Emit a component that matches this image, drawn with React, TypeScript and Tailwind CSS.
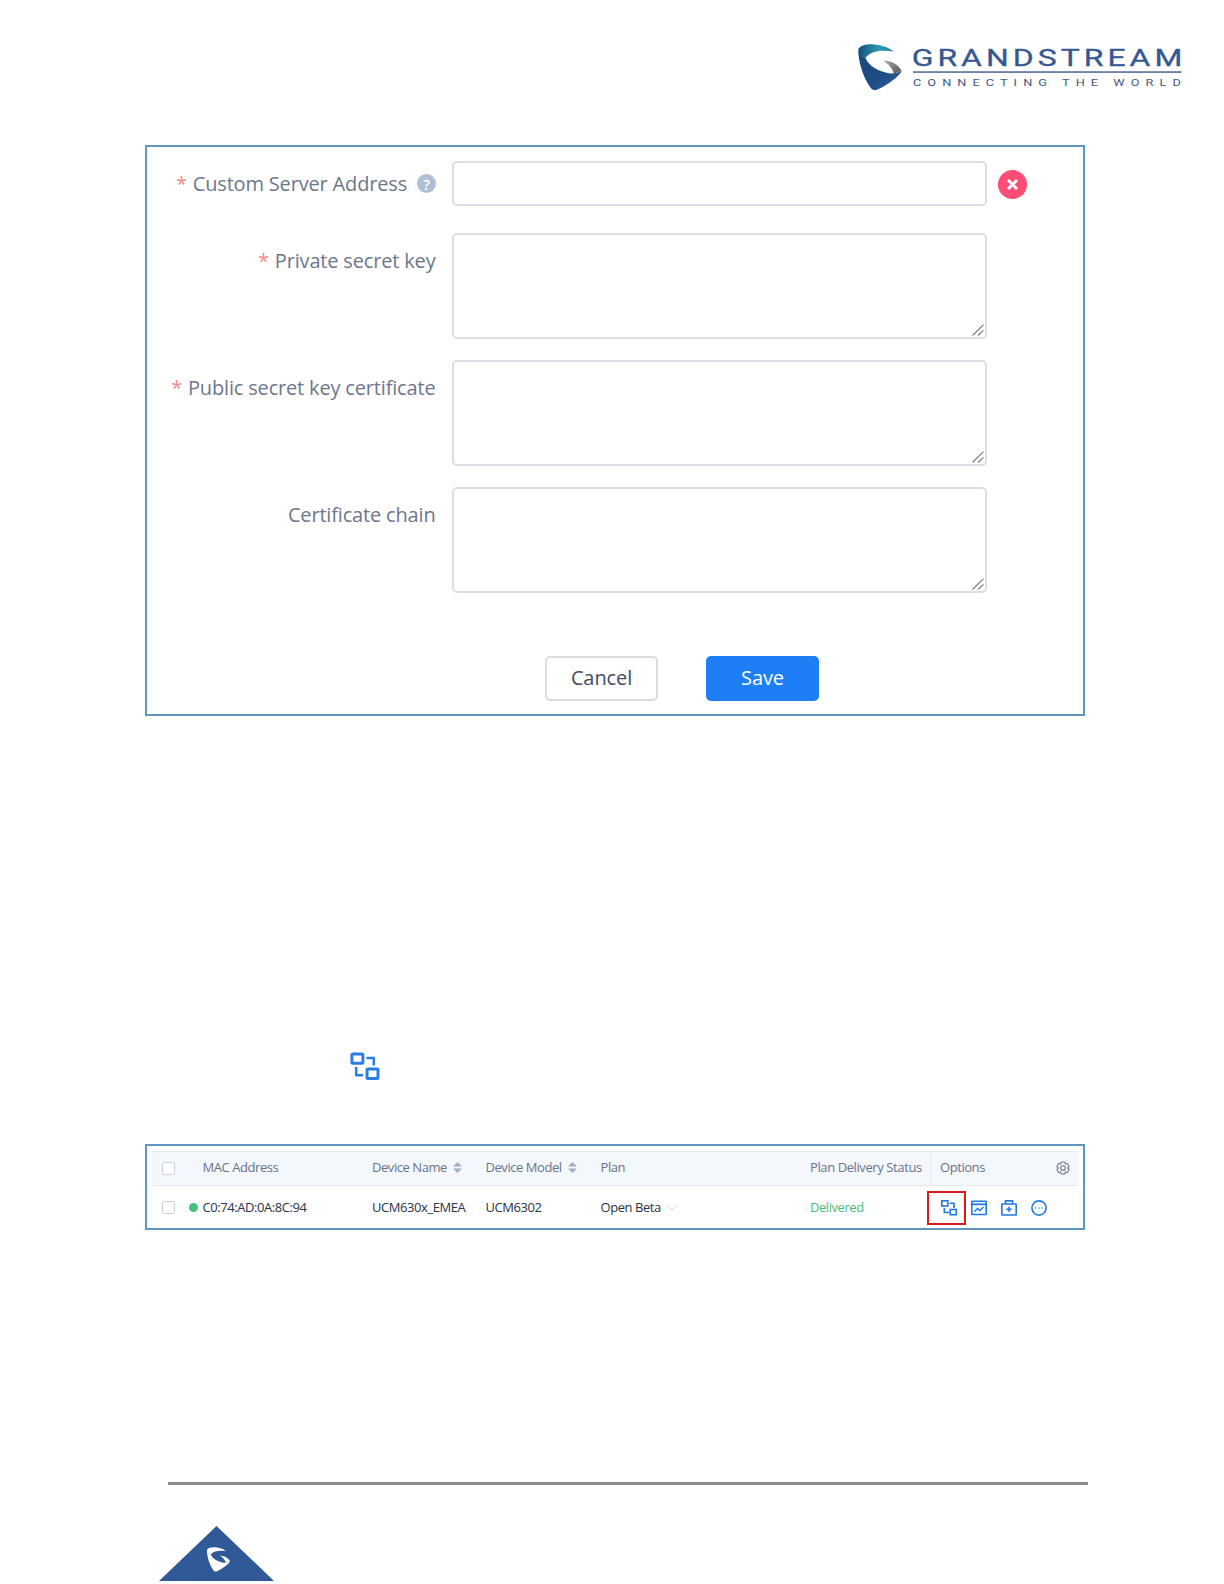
import React from "react";

const labelFont = "font-['Open_Sans','Noto_Sans',sans-serif]";

function BrandMark({ className, light = false }: { className: string; light?: boolean }) {
  return (
    <svg className={className} viewBox="0 0 44 47" aria-hidden="true">
      <defs>
        <linearGradient id="swoosh" x1="0" y1="0" x2="1" y2="0">
          <stop offset="0" stopColor="#17517f" />
          <stop offset="0.6" stopColor="#2d9ab5" />
          <stop offset="1" stopColor="#2a7fa5" />
        </linearGradient>
        <linearGradient id="shield" x1="0" y1="0" x2="1" y2="1">
          <stop offset="0" stopColor="#174a7c" />
          <stop offset="0.6" stopColor="#1f4c86" />
          <stop offset="1" stopColor="#34679c" />
        </linearGradient>
        <linearGradient id="wing" x1="0" y1="0" x2="1" y2="1">
          <stop offset="0" stopColor="#aaa" />
          <stop offset="1" stopColor="#555" />
        </linearGradient>
      </defs>
      <path d="M0.3 5C3 1 9 0 16 0.4C24 1 31 3.5 36 7.6C25 6 13 6.5 7.5 14L1.2 10Z" fill={light ? "#fff" : "url(#swoosh)"} />
      <path d="M0.3 5C1 9 3.5 12 7.5 14C11 22 20 27.5 32 29.5C36 30 40 28.5 43.7 27C42 32 28 42 19.5 45.6C16.5 46.7 14.5 46.3 12.5 43.5C5 33.5 0 17 0.3 5Z" fill={light ? "#fff" : "url(#shield)"} />
      <path d="M25 16.5C33 16.5 40.5 20.5 43.7 27L36 29.5C34 24.5 31 20 25 16.5Z" fill={light ? "#fff" : "url(#wing)"} />
    </svg>
  );
}

function LinkIcon({ className }: { className: string }) {
  return (
    <svg className={className} viewBox="0 0 30 29" fill="none" stroke="#2a7de8" strokeWidth="3" strokeLinejoin="round" aria-hidden="true">
      <rect x="1.9" y="2" width="11" height="9.2" rx="1" />
      <rect x="17" y="17" width="11" height="9.4" rx="1" />
      <path d="M16.5 6H23.8V13.4M6.2 15V23.2H13" strokeWidth="2.5" />
    </svg>
  );
}

function Grip() {
  return (
    <svg className="h-3 w-3" viewBox="0 0 12 12" stroke="#777" strokeWidth="1.1" aria-hidden="true">
      <path d="M0.5 11.5L11.5 0.7M6 11.5L11.5 6.3" />
    </svg>
  );
}

function Sort() {
  return (
    <svg className="ml-[6px] h-[11px] w-[9px]" viewBox="0 0 9 11" fill="#a3adc0" aria-hidden="true">
      <path d="M4.5 0L9 4.6H0ZM4.5 11L9 6.4H0Z" />
    </svg>
  );
}

function Field({ label, required }: { label: string; required?: boolean }) {
  return (
    <div className="flex h-[127px] items-start">
      <div className="flex w-[288.5px] justify-end pt-[14px] text-[20px] leading-7 tracking-[-0.17px] text-[#6d778c]">
        {required && <span className="mr-[6px] text-[#f58a88]">*</span>}
        <span>{label}</span>
      </div>
      <div className="ml-[16.5px] flex h-[106px] w-[535px] items-end justify-end rounded-[5px] border-2 border-[#dcdee6] p-px">
        <Grip />
      </div>
    </div>
  );
}

const cols = "grid grid-cols-[50.5px_169.5px_113.5px_115px_209.5px_119px_1fr] items-center";

export default function App() {
  return (
    <main className={`${labelFont} flex h-[1584px] w-[1224px] flex-col bg-white`}>
      <header className="flex h-[145px] items-start justify-end pr-[32px] pt-[44px]">
        <BrandMark className="mr-[11px] h-[47px] w-[44px]" />
        <svg className="h-[47px] w-[279px]" viewBox="0 0 279 47">
          <text x="-1" y="21.5" transform="scale(1.33 1)" fontFamily="Roboto" fontSize="24" fill="#345891" stroke="#345891" strokeWidth="0.3" textLength="205.5" letterSpacing="2">GRANDSTREAM</text>
          <rect y="27.3" width="268.5" height="1.5" fill="#4a6496" />
          <text x="0" y="42" transform="scale(1.3 1)" fontFamily="Roboto" fontSize="9.8" fill="#42577f" textLength="211" letterSpacing="5">CONNECTING THE WORLD</text>
        </svg>
      </header>

      <section className="ml-[145px] flex h-[571px] w-[940px] flex-col border-2 border-[#6196c0] pt-[14px]">
        <div className="flex h-[72px] items-start">
          <div className="flex w-[289px] items-center justify-end pt-[8.5px] text-[20px] leading-7 tracking-[-0.17px] text-[#6d778c]">
            <span className="mr-[6px] text-[#f58a88]">*</span>
            <span>Custom Server Address</span>
            <span className="ml-[10px] flex h-[19px] w-[19px] items-center justify-center rounded-full bg-[#afbfd5] text-[15px] font-semibold text-white">?</span>
          </div>
          <div className="ml-[16px] h-[45px] w-[535px] rounded-[5px] border-2 border-[#dadce8]" />
          <div className="ml-[10.5px] mt-[9px] flex h-[29px] w-[29px] items-center justify-center rounded-full bg-[#fb4d75]">
            <svg className="h-[11px] w-[11px]" viewBox="0 0 11 11" stroke="white" strokeWidth="3">
              <path d="M1 1L10 10M10 1L1 10" />
            </svg>
          </div>
        </div>
        <Field label="Private secret key" required />
        <Field label="Public secret key certificate" required />
        <Field label="Certificate chain" />
        <div className="ml-[398px] mt-[41.5px] flex gap-[48px] text-[20px]">
          <button className="h-[45px] w-[113px] rounded-[5px] border-2 border-[#dadce0] tracking-[-0.1px] text-[#414c62]">Cancel</button>
          <button className="h-[45px] w-[113px] rounded-[5px] bg-[#1e7ef5] tracking-[-0.1px] text-white">Save</button>
        </div>
      </section>

      <LinkIcon className="ml-[350px] mt-[336px] h-[29px] w-[30px]" />

      <section className="ml-[145px] mt-[63px] h-[86px] w-[940px] border-2 border-[#6196c0] px-[5px] pt-[5px] text-[13px] tracking-[-0.44px]">
        <div className={`${cols} h-[35px] border-y border-[#e4eaf0] bg-[#f4f8fc] text-[#68738a]`}>
          <span className="-mt-px ml-[10px] h-[13px] w-[13px] rounded-[2px] border border-[#cdd3dc] bg-white" />
          <span className="pb-px">MAC Address</span>
          <span className="flex items-center pb-[2px]">Device Name<Sort /></span>
          <span className="flex items-center pb-[2px]">Device Model<Sort /></span>
          <span className="pb-px">Plan</span>
          <span className="whitespace-nowrap pb-px tracking-[-0.4px]">Plan Delivery Status</span>
          <span className="ml-px flex h-full items-center justify-between border-l border-[#e4eaf0] pb-px pl-[9px] pr-[8px]">
            Options
            <svg className="h-[14px] w-[14px]" viewBox="0 0 24 24" fill="none" stroke="#6b7588" strokeWidth="1.8" strokeLinejoin="round">
              <path d="M9 1.8h6l1 3.4 3.5-.8 3 5.2L20 12l2.5 2.4-3 5.2-3.5-.8-1 3.4H9l-1-3.4-3.5.8-3-5.2L4 12 1.5 9.6l3-5.2 3.5.8Z" />
              <circle cx="12" cy="12" r="4" />
            </svg>
          </span>
        </div>
        <div className={`${cols} h-[42px] pt-px text-[#293347]`}>
          <span className="flex items-center">
            <span className="ml-[10px] h-[13px] w-[13px] rounded-[2px] border border-[#cdd3dc]" />
            <span className="ml-[14px] h-[9px] w-[9px] rounded-full bg-[#42c27c]" />
          </span>
          <span>C0:74:AD:0A:8C:94</span>
          <span>UCM630x_EMEA</span>
          <span>UCM6302</span>
          <span className="flex items-center">
            Open Beta
            <svg className="ml-[6px] h-[6px] w-[10px]" viewBox="0 0 10 6" fill="none" stroke="#ccd2da"><path d="M0.5 0.5L5 5.2L9.5 0.5" /></svg>
          </span>
          <span className="text-[#4cba7b]">Delivered</span>
          <span className="-ml-[2px] flex items-center">
            <span className="mr-[5px] flex h-[34px] w-[39px] items-center justify-center border-2 border-[#d51a20] pl-[5px]">
              <svg className="h-4 w-4" viewBox="0 0 16 16" fill="none" stroke="#2179e8" strokeWidth="1.6">
                <rect x="0.8" y="0.8" width="6" height="5.2" /><rect x="9.2" y="9.5" width="6" height="5.2" />
                <path d="M8.5 3.3H13V8M3.3 8V12.5H8" />
              </svg>
            </span>
            <span className="flex gap-[14px]">
              <svg className="h-4 w-4" viewBox="0 0 16 16" fill="none" stroke="#2179e8" strokeWidth="1.6">
                <rect x="0.8" y="1.3" width="14.4" height="13.2" rx="0.5" /><path d="M1 4.3H15" strokeWidth="1.8" /><path d="M3.5 11.5L6.5 8.5L9 10.5L12.5 7" />
              </svg>
              <svg className="h-4 w-4" viewBox="0 0 16 16" fill="none" stroke="#2179e8" strokeWidth="1.6">
                <rect x="0.8" y="4" width="14.4" height="11" rx="0.5" /><path d="M4.5 4V0.9H11.5V4M8 6.7V12M5.3 9.4H10.7" />
              </svg>
              <svg className="h-4 w-4" viewBox="0 0 16 16" fill="none" stroke="#2179e8" strokeWidth="1.6">
                <circle cx="8" cy="8" r="7.1" /><path d="M3.8 8H12.2" strokeWidth="1.2" strokeDasharray="1.5 1.9" />
              </svg>
            </span>
          </span>
        </div>
      </section>

      <footer className="mt-[252px]">
        <div className="ml-[167.5px] h-[2.5px] w-[920px] bg-[#8b8b8b]" />
        <div className="ml-[159px] mt-[41.5px] flex h-[55px] w-[115px] items-start justify-center bg-[#305998] pt-[21px] [clip-path:polygon(50%_0,100%_100%,0_100%)]">
          <BrandMark light className="ml-[3px] h-[25px] w-[25px]" />
        </div>
      </footer>
    </main>
  );
}
